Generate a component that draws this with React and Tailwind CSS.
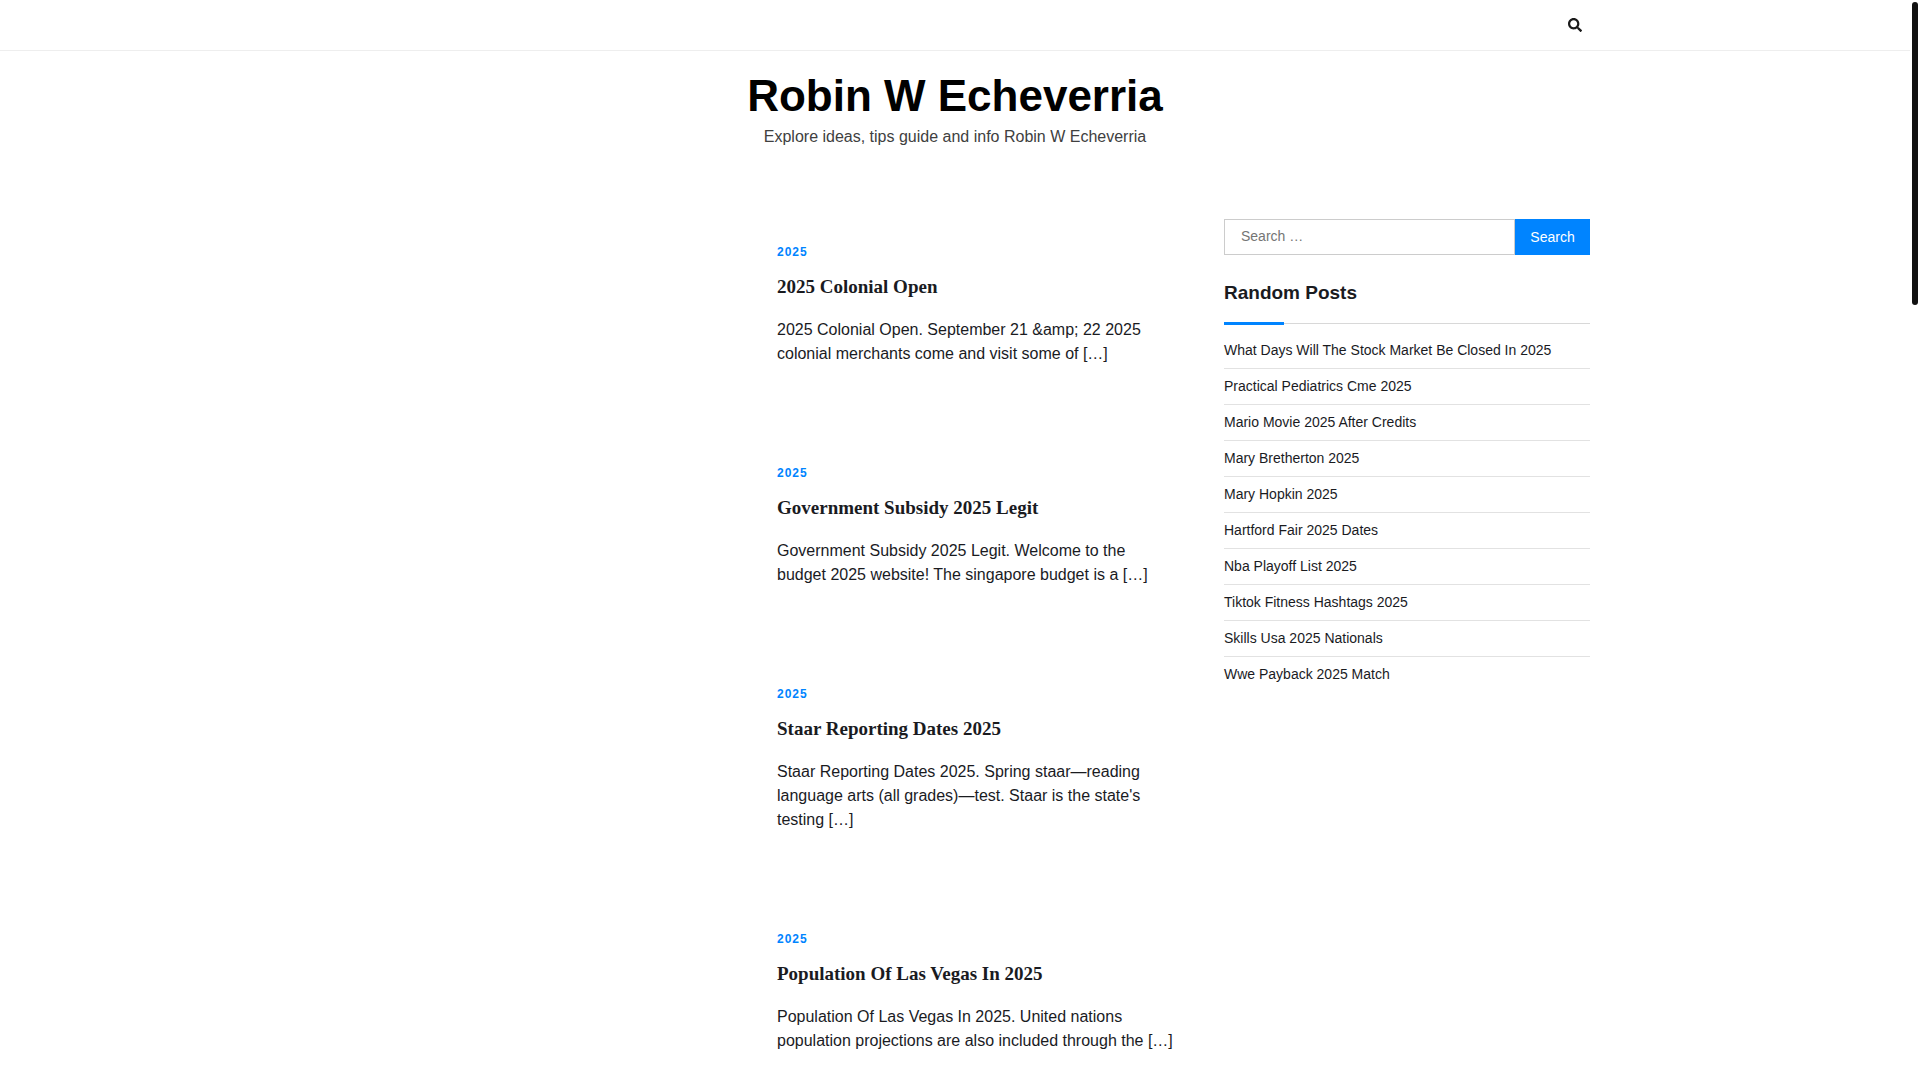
import React, { useState } from 'react';
import { FaSearch } from 'react-icons/fa';

const posts = [
  {
    id: 1,
    category: '2025',
    title: '2025 Colonial Open',
    excerpt: '2025 Colonial Open. September 21 &amp; 22 2025 colonial merchants come and visit some of […]',
  },
  {
    id: 2,
    category: '2025',
    title: 'Government Subsidy 2025 Legit',
    excerpt: 'Government Subsidy 2025 Legit. Welcome to the budget 2025 website! The singapore budget is a […]',
  },
  {
    id: 3,
    category: '2025',
    title: 'Staar Reporting Dates 2025',
    excerpt: "Staar Reporting Dates 2025. Spring staar—reading language arts (all grades)—test. Staar is the state's testing […]",
  },
  {
    id: 4,
    category: '2025',
    title: 'Population Of Las Vegas In 2025',
    excerpt: 'Population Of Las Vegas In 2025. United nations population projections are also included through the […]',
  },
];

const randomPosts = [
  'What Days Will The Stock Market Be Closed In 2025',
  'Practical Pediatrics Cme 2025',
  'Mario Movie 2025 After Credits',
  'Mary Bretherton 2025',
  'Mary Hopkin 2025',
  'Hartford Fair 2025 Dates',
  'Nba Playoff List 2025',
  'Tiktok Fitness Hashtags 2025',
  'Skills Usa 2025 Nationals',
  'Wwe Payback 2025 Match',
];

const TopBar = () => (
  <div className="border-b border-[#eeeeee]">
    <div className="mx-auto flex h-[50px] max-w-[1300px] items-center justify-end px-[15px]">
      <button type="button" aria-label="Open search" className="mr-2 text-sm text-[#1a1a1a]">
        <FaSearch />
      </button>
    </div>
  </div>
);

const SiteHeader = () => (
  <header className="pt-5 text-center">
    <h1 className="text-[44px] leading-[50px] font-bold text-black">
      <a href="#">Robin W Echeverria</a>
    </h1>
    <p className="mt-1 text-base leading-6 text-[#404040]">
      Explore ideas, tips guide and info Robin W Echeverria
    </p>
  </header>
);

const PostCard = ({ post }) => (
  <article className="grid grid-cols-2">
    {/* thumbnail column stays empty when a post has no image */}
    <div />
    <div className="p-5">
      <a href="#" className="block text-xs leading-5 font-bold tracking-[1px] text-[#0084ff]">
        {post.category}
      </a>
      <h2 className="mt-[13px] font-['Liberation_Serif',serif] text-[19px] leading-6 font-bold">
        <a href="#">{post.title}</a>
      </h2>
      <p className="mt-[19px] text-base leading-6">{post.excerpt}</p>
    </div>
  </article>
);

const SearchForm = () => {
  const [query, setQuery] = useState('');

  return (
    <form className="flex h-9 text-sm" onSubmit={(e) => e.preventDefault()}>
      <input
        type="search"
        aria-label="Search for"
        placeholder="Search …"
        value={query}
        onChange={(e) => setQuery(e.target.value)}
        className="min-w-0 flex-1 border border-[#cccccc] px-4 pb-0.5 placeholder:text-[#757575]"
      />
      <button type="submit" className="w-[75px] bg-[#0084ff] text-white">
        Search
      </button>
    </form>
  );
};

const Sidebar = () => (
  <aside>
    <SearchForm />
    <section className="mt-6">
      <h2 className="text-[19px] leading-7 font-bold">Random Posts</h2>
      <div className="mt-[15px] flex h-[3px] items-center">
        <span className="h-[3px] w-[60px] bg-[#0084ff]" />
        <span className="h-px flex-1 bg-[#d8d8d8]" />
      </div>
      <ul className="mt-2 divide-y divide-[#e2e2e2]">
        {randomPosts.map((title) => (
          <li key={title} className="pt-[7px] pb-2 text-sm leading-5">
            <a href="#">{title}</a>
          </li>
        ))}
      </ul>
    </section>
  </aside>
);

const App = () => {
  return (
    <div className="h-screen overflow-hidden bg-white pr-[10px] font-['Liberation_Sans',Arial,sans-serif] text-[#1a1b1f]">
      <TopBar />
      <SiteHeader />
      <div className="mx-auto mt-[70px] grid max-w-[1300px] grid-cols-[minmax(0,1fr)_366px] gap-[30px] px-[15px]">
        <main className="flex flex-col gap-[57px] pt-[3px]">
          {posts.map((post) => (
            <PostCard key={post.id} post={post} />
          ))}
        </main>
        <Sidebar />
      </div>
      {/* scrollbar thumb */}
      <div className="fixed top-0.5 right-0.5 h-[303px] w-1.5 rounded-full bg-[#111111]" />
    </div>
  );
};

export default App;
